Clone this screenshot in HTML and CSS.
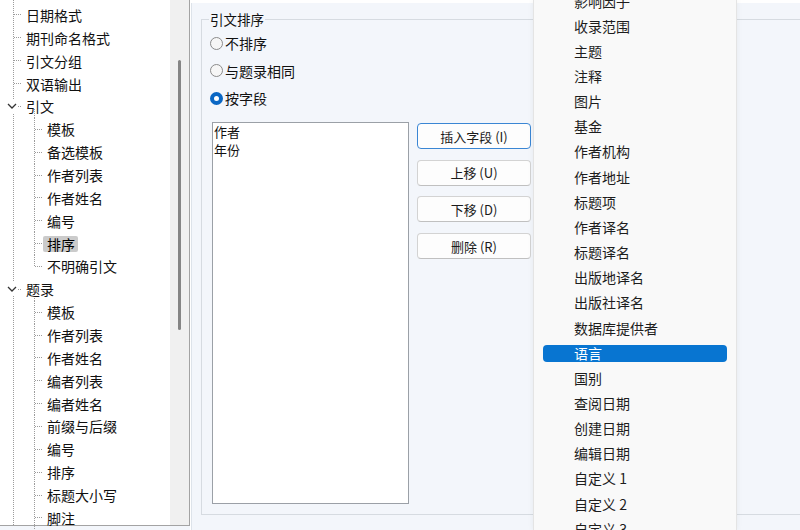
FILE: index.html
```html
<!DOCTYPE html>
<html lang="zh-CN">
<head>
<meta charset="utf-8">
<title>引文排序</title>
<link rel="stylesheet" href="styles.css">
</head>
<body>
<div class="app">
  <aside class="left">
    <ul class="tree">
      <li class="row r1"><span class="lbl">日期格式</span></li>
      <li class="row r1"><span class="lbl">期刊命名格式</span></li>
      <li class="row r1"><span class="lbl">引文分组</span></li>
      <li class="row r1"><span class="lbl">双语输出</span></li>
      <li class="row rp"><svg class="chev" viewBox="0 0 12 14" width="12" height="14"><path d="M2 5 L6 9 L10 5" fill="none" stroke="#333" stroke-width="1.3"/></svg><span class="lbl">引文</span></li>
      <li class="row r2"><span class="lbl">模板</span></li>
      <li class="row r2"><span class="lbl">备选模板</span></li>
      <li class="row r2"><span class="lbl">作者列表</span></li>
      <li class="row r2"><span class="lbl">作者姓名</span></li>
      <li class="row r2"><span class="lbl">编号</span></li>
      <li class="row r2"><span class="lbl sel">排序</span></li>
      <li class="row r2 last"><span class="lbl">不明确引文</span></li>
      <li class="row rp"><svg class="chev" viewBox="0 0 12 14" width="12" height="14"><path d="M2 5 L6 9 L10 5" fill="none" stroke="#333" stroke-width="1.3"/></svg><span class="lbl">题录</span></li>
      <li class="row r2"><span class="lbl">模板</span></li>
      <li class="row r2"><span class="lbl">作者列表</span></li>
      <li class="row r2"><span class="lbl">作者姓名</span></li>
      <li class="row r2"><span class="lbl">编者列表</span></li>
      <li class="row r2"><span class="lbl">编者姓名</span></li>
      <li class="row r2"><span class="lbl">前缀与后缀</span></li>
      <li class="row r2"><span class="lbl">编号</span></li>
      <li class="row r2"><span class="lbl">排序</span></li>
      <li class="row r2"><span class="lbl">标题大小写</span></li>
      <li class="row r2"><span class="lbl">脚注</span></li>
    </ul>
    <div class="vscroll"><div class="thumb"></div></div>
  </aside>

  <main class="main">
    <fieldset class="group">
      <legend class="group-title">引文排序</legend>
      <div class="radios">
        <label class="radio"><span class="dot"></span>不排序</label>
        <label class="radio"><span class="dot"></span>与题录相同</label>
        <label class="radio"><span class="dot on"></span>按字段</label>
      </div>
      <div class="fields">
        <div class="listbox">
          <div class="li">作者</div>
          <div class="li">年份</div>
        </div>
        <div class="buttons">
          <button class="btn default">插入字段 (I)</button>
          <button class="btn">上移 (U)</button>
          <button class="btn">下移 (D)</button>
          <button class="btn">删除 (R)</button>
        </div>
      </div>
    </fieldset>
  </main>

  <div class="popup">
    <ul class="opts">
      <li class="opt"><span>影响因子</span></li>
      <li class="opt"><span>收录范围</span></li>
      <li class="opt"><span>主题</span></li>
      <li class="opt"><span>注释</span></li>
      <li class="opt"><span>图片</span></li>
      <li class="opt"><span>基金</span></li>
      <li class="opt"><span>作者机构</span></li>
      <li class="opt"><span>作者地址</span></li>
      <li class="opt"><span>标题项</span></li>
      <li class="opt"><span>作者译名</span></li>
      <li class="opt"><span>标题译名</span></li>
      <li class="opt"><span>出版地译名</span></li>
      <li class="opt"><span>出版社译名</span></li>
      <li class="opt"><span>数据库提供者</span></li>
      <li class="opt selected"><span>语言</span></li>
      <li class="opt"><span>国别</span></li>
      <li class="opt"><span>查阅日期</span></li>
      <li class="opt"><span>创建日期</span></li>
      <li class="opt"><span>编辑日期</span></li>
      <li class="opt"><span>自定义 1</span></li>
      <li class="opt"><span>自定义 2</span></li>
      <li class="opt"><span>自定义 3</span></li>
    </ul>
  </div>
</div>
</body>
</html>
```

FILE: styles.css
```css
* { box-sizing: border-box; }
html, body { margin: 0; padding: 0; }
body {
  width: 800px;
  height: 530px;
  overflow: hidden;
  font-family: "Noto Sans CJK SC", "Noto Sans", sans-serif;
  color: #111;
  background: #fff;
}
ul { list-style: none; margin: 0; padding: 0; }

.app {
  --dv: repeating-linear-gradient(to bottom, #9c9c9c 0 1px, transparent 1px 2px);
  --dh: repeating-linear-gradient(to right, #9c9c9c 0 1px, transparent 1px 2px);
  position: relative;
  display: flex;
  width: 800px;
  height: 530px;
  background: #f3f6fb;
  overflow: hidden;
}

/* left tree panel */
.left {
  flex: 0 0 190px;
  height: 526px;
  display: flex;
  background: #fff;
  border-right: 1px solid #a3a3a3;
  border-bottom: 1px solid #a3a3a3;
}
.tree {
  flex: 0 0 170px;
  padding-top: 3.57px;
  font-size: 14px;
  background: var(--dv) 13px 0 / 1px 100% no-repeat;
}
.row {
  height: 22.86px;
  display: flex;
  align-items: center;
  white-space: nowrap;
}
.r1 {
  padding-left: 22px;
  background: var(--dh) 14px 50% / 8px 1px no-repeat;
}
.r2 {
  padding-left: 43px;
  background:
    var(--dh) 35px 50% / 8px 1px no-repeat,
    var(--dv) 34px 0 / 1px 100% no-repeat;
}
.r2.last {
  background:
    var(--dh) 35px 50% / 8px 1px no-repeat,
    var(--dv) 34px 0 / 1px 50% no-repeat;
}
.rp {
  padding-left: 6px;
  background:
    var(--dh) 14px 50% / 8px 1px no-repeat,
    var(--dv) 34px 100% / 1px 40% no-repeat;
}
.chev {
  display: block;
  background: #fff;
  margin-right: 4px;
}
.lbl {
  display: inline-block;
  line-height: 16px;
  padding: 0 3px 0 4px;
  border-radius: 2px;
}
.lbl.sel { background: #cbcbcb; color: #000; }

.vscroll {
  flex: 0 0 19px;
  background: #f0f0f0;
  padding: 60px 0 0 8px;
}
.thumb {
  width: 2.5px;
  height: 270px;
  border-radius: 2px;
  background: #858585;
}

/* main panel */
.main {
  flex: 1;
  min-width: 0;
  border-top: 3px solid #fff;
  border-left: 1px solid #fff;
  box-shadow: inset 1px 0 0 #dde3ea;
  padding-left: 10px;
  overflow: hidden;
}
.group {
  width: 700px;
  margin: 7px 0 0 0;
  padding: 0 0 10px 8px;
  border: 1px solid #d6dbe1;
  min-width: 0;
}
.group-title {
  padding: 0 1px;
  margin-left: -1px;
  font-size: 13.5px;
  line-height: 18px;
}
.radios { padding-top: 1.5px; }
.radio {
  height: 27.5px;
  display: flex;
  align-items: center;
  font-size: 14px;
}
.dot {
  width: 13px;
  height: 13px;
  border-radius: 50%;
  border: 1px solid #8b8b8b;
  background: #f6f6f6;
  margin-right: 2px;
}
.dot.on {
  border: 4px solid #0a67c4;
  background: #fff;
}
.fields {
  display: flex;
  align-items: flex-start;
  margin-top: 10px;
}
.listbox {
  width: 197px;
  height: 382px;
  margin-left: 2px;
  background: #fff;
  border: 1px solid #9ba0a7;
  padding: 0 1px;
  font-size: 13px;
  line-height: 18px;
}
.buttons {
  display: flex;
  flex-direction: column;
  gap: 10.7px;
  margin: 1px 0 0 8px;
}
.btn {
  width: 114px;
  height: 26px;
  padding: 0;
  font-family: inherit;
  font-size: 13px;
  color: #1b1b1b;
  background: #fdfdfd;
  border: 1px solid #d3d3d3;
  border-bottom-color: #c0c0c0;
  border-radius: 4px;
}
.btn.default {
  border: 1px solid #3a86d4;
}

/* dropdown list overlay */
.popup {
  position: absolute;
  left: 533px;
  top: 0;
  width: 204px;
  height: 530px;
  background: #f9f9f9;
  border-left: 1px solid #e4e4e4;
  border-right: 1px solid #e4e4e4;
  box-shadow: 0 0 6px rgba(0, 0, 0, 0.06);
}
.opts {
  margin-top: -11.58px;
  font-size: 14px;
  color: #1d1d1d;
}
.opt {
  height: 25.16px;
  display: flex;
  align-items: center;
  white-space: nowrap;
}
.opt span {
  display: block;
  flex: 1;
  margin: 0 9px;
  padding-left: 31px;
  line-height: 17px;
  border-radius: 4px;
}
.opt.selected span {
  background: #0875d1;
  color: #fff;
}
```
